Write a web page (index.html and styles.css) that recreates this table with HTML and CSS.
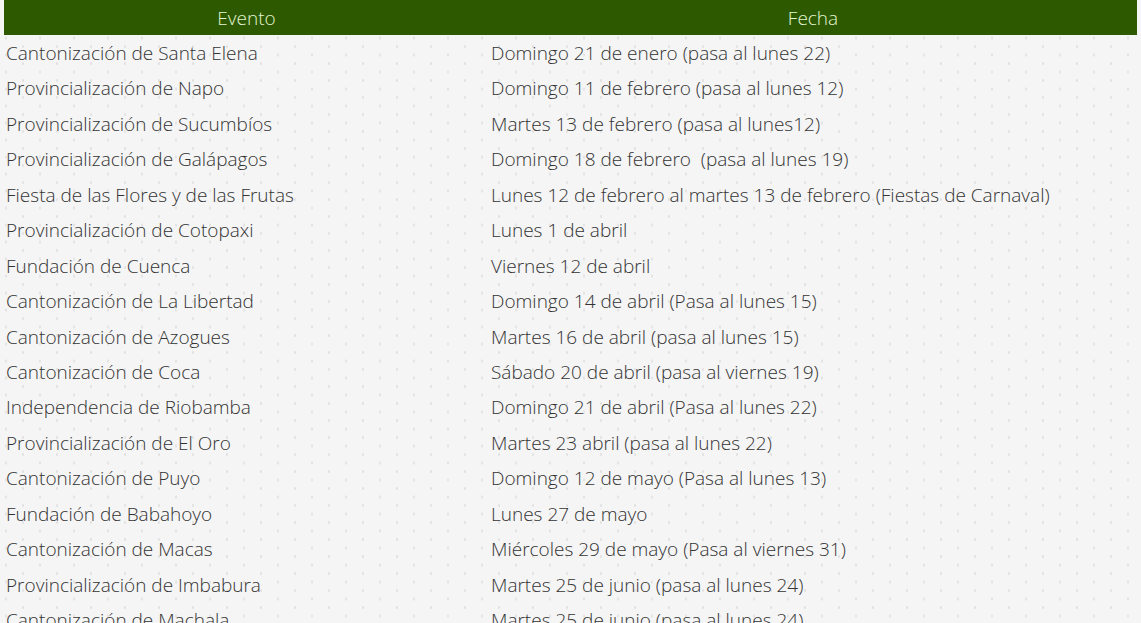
FILE: index.html
```html
<!DOCTYPE html>
<html lang="es">
<head>
<meta charset="utf-8">
<title>Feriados</title>
<link rel="stylesheet" href="styles.css">
</head>
<body>
<table class="feriados">
  <thead>
    <tr><th class="col-evento">Evento</th><th class="col-fecha">Fecha</th></tr>
  </thead>
  <tbody>
    <tr><td>Cantonización de Santa Elena</td><td>Domingo 21 de enero (pasa al lunes 22)</td></tr>
    <tr><td>Provincialización de Napo</td><td>Domingo 11 de febrero (pasa al lunes 12)</td></tr>
    <tr><td>Provincialización de Sucumbíos</td><td>Martes 13 de febrero (pasa al lunes12)</td></tr>
    <tr><td>Provincialización de Galápagos</td><td>Domingo 18 de febrero&nbsp; (pasa al lunes 19)</td></tr>
    <tr><td>Fiesta de las Flores y de las Frutas</td><td>Lunes 12 de febrero al martes 13 de febrero (Fiestas de Carnaval)</td></tr>
    <tr><td>Provincialización de Cotopaxi</td><td>Lunes 1 de abril</td></tr>
    <tr><td>Fundación de Cuenca</td><td>Viernes 12 de abril</td></tr>
    <tr><td>Cantonización de La Libertad</td><td>Domingo 14 de abril (Pasa al lunes 15)</td></tr>
    <tr><td>Cantonización de Azogues</td><td>Martes 16 de abril (pasa al lunes 15)</td></tr>
    <tr><td>Cantonización de Coca</td><td>Sábado 20 de abril (pasa al viernes 19)</td></tr>
    <tr><td>Independencia de Riobamba</td><td>Domingo 21 de abril (Pasa al lunes 22)</td></tr>
    <tr><td>Provincialización de El Oro</td><td>Martes 23 abril (pasa al lunes 22)</td></tr>
    <tr><td>Cantonización de Puyo</td><td>Domingo 12 de mayo (Pasa al lunes 13)</td></tr>
    <tr><td>Fundación de Babahoyo</td><td>Lunes 27 de mayo</td></tr>
    <tr><td>Cantonización de Macas</td><td>Miércoles 29 de mayo (Pasa al viernes 31)</td></tr>
    <tr><td>Provincialización de Imbabura</td><td>Martes 25 de junio (pasa al lunes 24)</td></tr>
    <tr><td>Cantonización de Machala</td><td>Martes 25 de junio (pasa al lunes 24)</td></tr>
  </tbody>
</table>
</body>
</html>
```
FILE: styles.css
```css
html, body {
  margin: 0;
  padding: 0;
}
body {
  background-color: #f5f5f5;
  background-image:
    radial-gradient(circle, #e2e2e2 1px, transparent 1.5px),
    radial-gradient(circle, #e2e2e2 1px, transparent 1.5px);
  background-size: 34px 17px, 34px 17px;
  background-position: 6px 4px, 23px 12.5px;
  font-family: "Open Sans", "Liberation Sans", sans-serif;
  font-weight: 300;
  color: #333333;
  padding: 0 4px;
  overflow: hidden;
  height: 623px;
}
.feriados {
  width: 1133px;
  border-collapse: collapse;
  border-spacing: 0;
  font-size: 19px;
  line-height: 26px;
}
.feriados thead tr {
  background: #2d5a00;
}
.feriados th {
  font-weight: 300;
  color: #e4f6d4;
  font-size: 19px;
  height: 35px;
  padding: 0;
  text-align: center;
}
.col-evento {
  width: 485px;
}
.feriados td {
  box-sizing: border-box;
  height: 35.45px;
  padding: 5px 2px 4.45px;
  vertical-align: top;
  white-space: nowrap;
}
```
